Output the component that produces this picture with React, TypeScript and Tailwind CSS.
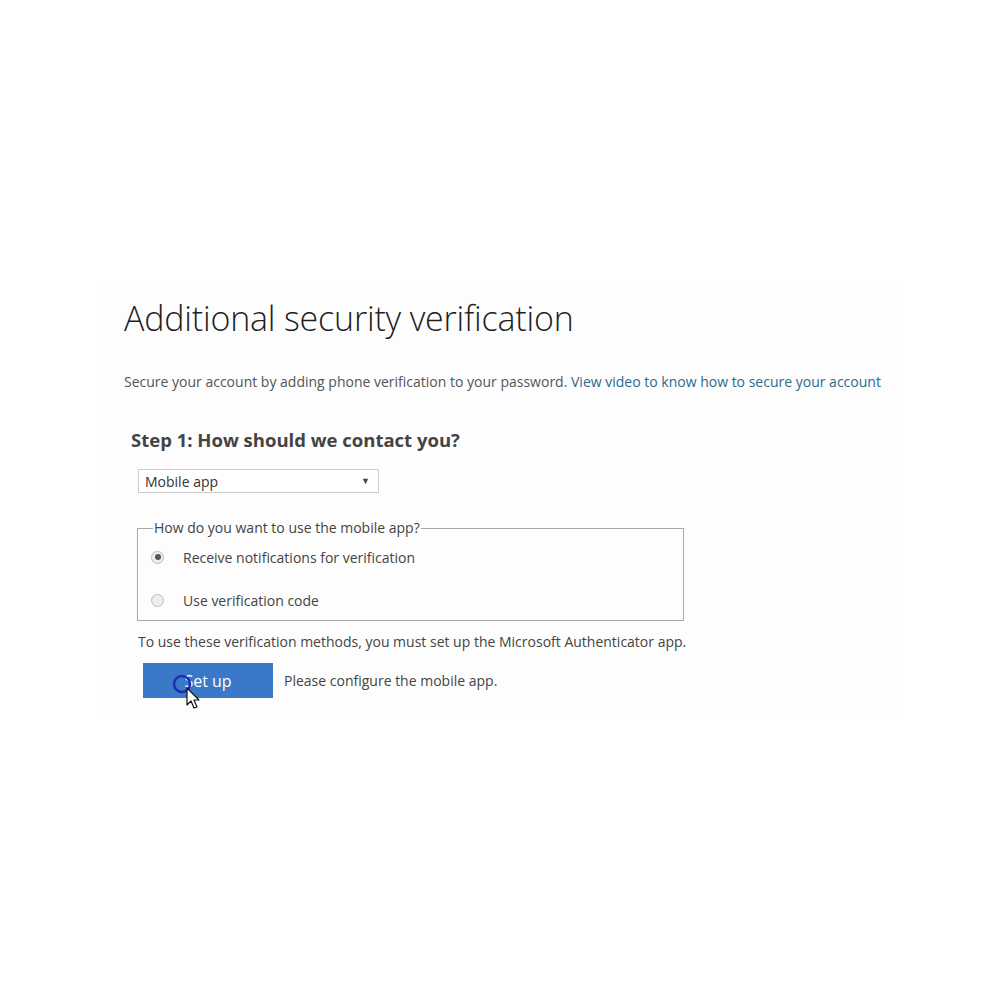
export default function App() {
  return (
    <div className="w-[1000px] h-[1000px] bg-white pt-[282px] pl-[102px]" style={{ fontFamily: '"Open Sans", "Noto Sans", sans-serif' }}>
      <div className="relative w-[796px] h-[436px] bg-[#fdfdfd] pl-[22px] pt-[14px]">
        <h1 className="text-[34px] font-light text-[#1f1f1f] leading-[44px] tracking-[-0.2px]">Additional security verification</h1>
        <p className="mt-[32px] text-[14px] text-[#555] leading-[20px]">
          Secure your account by adding phone verification to your password.{" "}
          <a className="text-[#2a6a8f]">View video to know how to secure your account</a>
        </p>
        <div className="pl-[7px]">
          <h2 className="mt-[35px] text-[18.5px] font-bold text-[#444] leading-[26px]">Step 1: How should we contact you?</h2>
          <div className="mt-[16px] ml-[7px] w-[241px] h-[24px] border border-[#ccc] bg-white flex items-center justify-between px-[6px] text-[14px] text-[#333]">
            <span>Mobile app</span>
            <span className="text-[9px] text-[#444] pr-[2px]">▼</span>
          </div>
          <fieldset className="mt-[25px] ml-[6px] w-[547px] h-[103px] border border-[#aaa] px-[13px] pb-0">
            <legend className="px-[1px] ml-[2px] text-[14px] text-[#444] leading-[20px]">How do you want to use the mobile app?</legend>
            <label className="flex items-center h-[20px] mt-[9px] text-[14px] text-[#444]">
              <span className="w-[13px] h-[13px] rounded-full border border-[#bbb] bg-[#eee] flex items-center justify-center">
                <span className="w-[6px] h-[6px] rounded-full bg-[#555]" />
              </span>
              <span className="ml-[19px]">Receive notifications for verification</span>
            </label>
            <label className="flex items-center h-[20px] mt-[23px] text-[14px] text-[#444]">
              <span className="w-[13px] h-[13px] rounded-full border border-[#bbb] bg-[#eee]" />
              <span className="ml-[19px]">Use verification code</span>
            </label>
          </fieldset>
          <p className="mt-[11px] ml-[7px] text-[14px] text-[#444] leading-[20px]">To use these verification methods, you must set up the Microsoft Authenticator app.</p>
          <div className="mt-[11px] ml-[12px] flex items-center">
            <button className="w-[130px] h-[35px] bg-[#3a78c8] text-white text-[16px]">Set up</button>
            <span className="ml-[11px] text-[14px] text-[#444]">Please configure the mobile app.</span>
          </div>
        </div>
        {/* mouse cursor with click ring */}
        <svg className="absolute left-[68px] top-[390px]" width="34" height="40" viewBox="0 0 34 40">
          <circle cx="12" cy="12" r="8" fill="none" stroke="#1a2fb0" strokeWidth="2.5" />
          <path d="M17 16 L17 33 L21 29 L24 36 L27 35 L24 28 L29 28 Z" fill="white" stroke="#111" strokeWidth="1.2" strokeLinejoin="round" />
        </svg>
      </div>
    </div>
  );
}
